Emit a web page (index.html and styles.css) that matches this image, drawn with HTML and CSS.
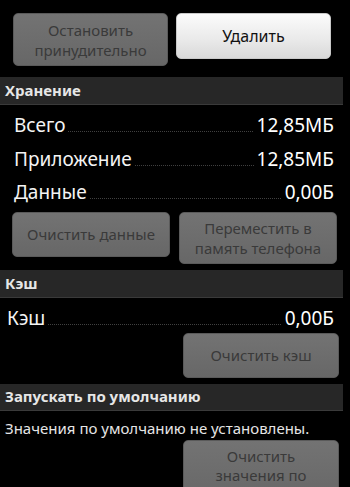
FILE: index.html
```html
<!DOCTYPE html>
<html lang="ru">
<head>
<meta charset="utf-8">
<title>О приложении</title>
<link rel="stylesheet" href="styles.css">
</head>
<body>
<div class="screen">
  <div class="actions">
    <div class="btn btn-disabled btn-force">Остановить<br>принудительно</div>
    <div class="btn btn-primary btn-delete">Удалить</div>
  </div>

  <div class="section-header">Хранение</div>
  <div class="rows">
    <div class="row"><span class="label">Всего</span><span class="leader"></span><span class="value">12,85МБ</span></div>
    <div class="row"><span class="label">Приложение</span><span class="leader"></span><span class="value">12,85МБ</span></div>
    <div class="row"><span class="label">Данные</span><span class="leader"></span><span class="value">0,00Б</span></div>
  </div>
  <div class="actions actions-storage">
    <div class="btn btn-disabled btn-clear-data">Очистить данные</div>
    <div class="btn btn-disabled btn-move">Переместить в<br>память телефона</div>
  </div>

  <div class="section-header header-cache">Кэш</div>
  <div class="rows rows-cache">
    <div class="row row-cache"><span class="label">Кэш</span><span class="leader"></span><span class="value">0,00Б</span></div>
  </div>
  <div class="actions actions-right">
    <div class="btn btn-disabled btn-clear-cache">Очистить кэш</div>
  </div>

  <div class="section-header header-default">Запускать по умолчанию</div>
  <div class="note">Значения по умолчанию не установлены.</div>
  <div class="actions actions-right">
    <div class="btn btn-disabled btn-clear-defaults">Очистить<br>значения по</div>
  </div>
</div>
</body>
</html>
```

FILE: styles.css
```css
html, body {
  margin: 0;
  padding: 0;
  background: #000;
}

body {
  font-family: "Noto Sans", "Open Sans", "DejaVu Sans", sans-serif;
  color: #f2f2f2;
  width: 350px;
  height: 487px;
  overflow: hidden;
}

.screen {
  display: flex;
  flex-direction: column;
}

.actions {
  display: flex;
  align-items: flex-start;
  gap: 8px;
  padding: 13px 19px 0 13px;
}

.btn {
  box-sizing: border-box;
  display: flex;
  align-items: center;
  justify-content: center;
  text-align: center;
  border-radius: 5px;
  font-size: 15px;
  line-height: 20px;
}

.btn-disabled {
  background: linear-gradient(#737373, #676767);
  border: 1px solid #5a5a5a;
  color: #3a3a3a;
}

.btn-primary {
  background: linear-gradient(#fbfbfb, #e9e9e9 60%, #d9d9d9);
  border: 1px solid #c9c9c9;
  color: #111;
  font-size: 16px;
}

.btn-force {
  width: 155px;
  height: 53px;
}

.btn-delete {
  width: 155px;
  height: 46px;
}

.section-header {
  box-sizing: border-box;
  width: 343px;
  height: 28px;
  margin-top: 11px;
  padding: 3px 0 0 5px;
  background: #272727;
  border-bottom: 1px solid #3a3a3a;
  color: #e6e6e6;
  font-weight: bold;
  font-size: 15px;
  line-height: 20px;
}

.rows {
  padding: 4px 16px 0 14px;
}

.row {
  display: flex;
  align-items: baseline;
  font-size: 19px;
  line-height: 33.5px;
}

.label {
  color: #f4f4f4;
}

.value {
  color: #fff;
}

.leader {
  flex: 1;
  height: 1px;
  margin: 0 3px;
  background-image: linear-gradient(to right, #404040 50%, transparent 50%);
  background-size: 2px 1px;
  background-repeat: repeat-x;
}

.actions-storage {
  gap: 9px;
  padding: 2px 13px 0 12px;
}

.btn-clear-data {
  width: 158px;
  height: 45px;
}

.btn-move {
  width: 158px;
  height: 52px;
}

.header-cache {
  margin-top: 6px;
}

.rows-cache {
  padding: 5px 16px 0 7px;
}

.row-cache {
  line-height: 30px;
}

.actions-right {
  justify-content: flex-end;
  padding: 0 11px 0 0;
}

.btn-clear-cache {
  width: 156px;
  height: 45px;
}

.header-default {
  margin-top: 6px;
  height: 27px;
  padding-top: 2px;
}

.note {
  padding: 5px 0 0 5px;
  font-size: 15px;
  line-height: 24px;
  color: #e6e6e6;
}

.btn-clear-defaults {
  width: 156px;
  height: 60px;
  align-items: flex-start;
  padding-top: 6px;
  line-height: 19px;
}
```
